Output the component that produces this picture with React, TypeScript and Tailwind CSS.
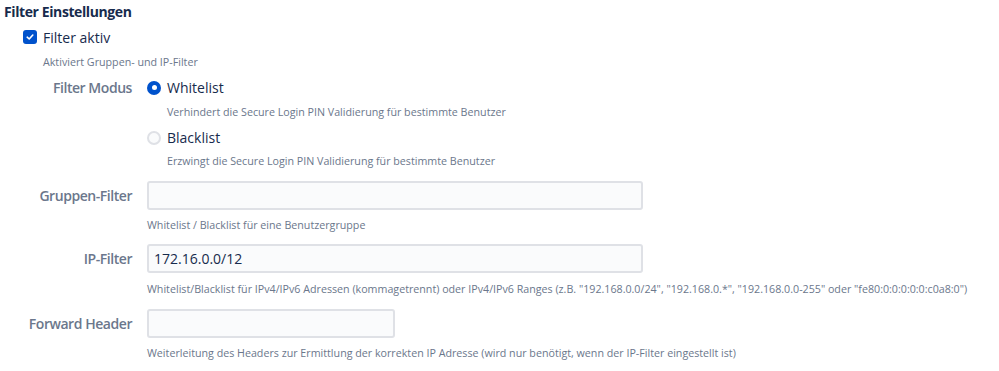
import React from "react";

const font = { fontFamily: '"Open Sans", "Noto Sans", sans-serif' };

function Check() {
  return (
    <span className="w-[14px] h-[14px] rounded-[3px] bg-[#0052cc] flex items-center justify-center">
      <svg width="10" height="10" viewBox="0 0 10 10">
        <path d="M2.2 5.2 L4.2 7 L7.8 3" fill="none" stroke="#fff" strokeWidth="1.6" strokeLinecap="round" strokeLinejoin="round" />
      </svg>
    </span>
  );
}

function Radio({ on }: { on?: boolean }) {
  return on ? (
    <span className="w-[14px] h-[14px] rounded-full bg-[#0052cc] flex items-center justify-center">
      <span className="w-[5px] h-[5px] rounded-full bg-white" />
    </span>
  ) : (
    <span className="w-[14px] h-[14px] rounded-full bg-[#fafbfc] border-2 border-[#dfe1e6]" />
  );
}

function Desc({ children, h = "h-[25px]" }: { children: React.ReactNode; h?: string }) {
  return <div className={`${h} flex items-center text-[10.7px] text-[#6b778c] whitespace-nowrap`}>{children}</div>;
}

function Label({ children }: { children: React.ReactNode }) {
  return <div className="w-[132px] shrink-0 text-right text-[14px] font-semibold tracking-[-0.45px] text-[#6b778c]">{children}</div>;
}

export default function App() {
  return (
    <div className="w-[999px] h-[371px] bg-white text-[#172b4d]" style={font}>
      <div className="h-[22px] pl-[4px] flex items-center text-[14px] font-bold tracking-[-0.4px]">Filter Einstellungen</div>
      <div className="h-[30px] pl-[23px] flex items-center gap-[6px] text-[14px]">
        <Check />
        <span>Filter aktiv</span>
      </div>
      <div className="pl-[43px]">
        <Desc h="h-[20px]">Aktiviert Gruppen- und IP-Filter</Desc>
      </div>
      <div className="mt-[3px] flex gap-[15px]">
        <div className="h-[25px] flex items-center justify-end w-[132px]">
          <Label>Filter Modus</Label>
        </div>
        <div>
          <div className="h-[25px] flex items-center gap-[6px] text-[14px]">
            <Radio on />
            <span>Whitelist</span>
          </div>
          <div className="pl-[20px]">
            <Desc>Verhindert die Secure Login PIN Validierung für bestimmte Benutzer</Desc>
          </div>
          <div className="h-[25px] flex items-center gap-[6px] text-[14px]">
            <Radio />
            <span>Blacklist</span>
          </div>
          <div className="pl-[20px]">
            <Desc h="h-[23px]">Erzwingt die Secure Login PIN Validierung für bestimmte Benutzer</Desc>
          </div>
        </div>
      </div>
      <div className="mt-[8px] flex gap-[15px]">
        <div className="h-[29px] flex items-center"><Label>Gruppen-Filter</Label></div>
        <div>
          <div className="w-[496px] h-[29px] bg-[#fafbfc] border-2 border-[#dfe1e6] rounded-[3px]" />
          <Desc h="h-[30px]">Whitelist / Blacklist für eine Benutzergruppe</Desc>
        </div>
      </div>
      <div className="mt-[4px] flex gap-[15px]">
        <div className="h-[29px] flex items-center"><Label>IP-Filter</Label></div>
        <div>
          <div className="w-[496px] h-[29px] bg-[#fafbfc] border-2 border-[#dfe1e6] rounded-[3px] flex items-center pl-[5px] text-[14px]">172.16.0.0/12</div>
          <Desc h="h-[32px]">Whitelist/Blacklist für IPv4/IPv6 Adressen (kommagetrennt) oder IPv4/IPv6 Ranges (z.B. "192.168.0.0/24", "192.168.0.*", "192.168.0.0-255" oder "fe80:0:0:0:0:0:c0a8:0")</Desc>
        </div>
      </div>
      <div className="mt-[4px] flex gap-[15px]">
        <div className="h-[29px] flex items-center"><Label>Forward Header</Label></div>
        <div>
          <div className="w-[248px] h-[29px] bg-[#fafbfc] border-2 border-[#dfe1e6] rounded-[3px]" />
          <Desc h="h-[30px]">Weiterleitung des Headers zur Ermittlung der korrekten IP Adresse (wird nur benötigt, wenn der IP-Filter eingestellt ist)</Desc>
        </div>
      </div>
    </div>
  );
}
